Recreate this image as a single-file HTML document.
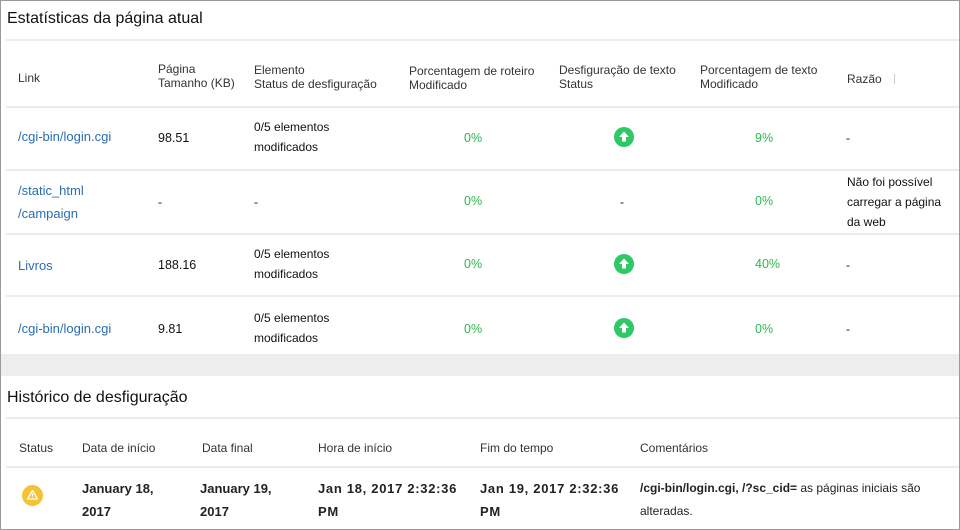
<!DOCTYPE html>
<html><head><meta charset="utf-8"><style>
body{margin:0;width:960px;height:530px;overflow:hidden;background:#fff;font-family:"Liberation Sans",sans-serif;color:#111;}
.frame{position:absolute;left:0;top:0;width:958px;height:528px;border:1px solid #9a9a9a;}
.t{position:absolute;white-space:nowrap;font-size:12px;line-height:20px;}
.h{color:#333;font-size:12px;line-height:14px;}
.l{color:#2a6db5;font-size:13px;}
.g{color:#2db84d;font-size:12.5px;}
.line{position:absolute;left:6px;right:1px;height:2px;background:#ececec;}
.title{position:absolute;font-size:16px;color:#111;}
.up{position:absolute;width:20px;height:20px;border-radius:50%;background:#2ec866;}
.up svg{position:absolute;left:0;top:0}
.d{font-weight:bold;color:#222;font-size:13px;line-height:23px;}
</style></head><body>
<div class="frame"></div>
<div class="title" style="left:7px;top:10px">Estatísticas da página atual</div>
<div class="line" style="top:39px"></div>
<div class="t h" style="left:18px;top:71px">Link</div>
<div class="t h" style="left:158px;top:62px">Página<br>Tamanho (KB)</div>
<div class="t h" style="left:254px;top:63px">Elemento<br>Status de desfiguração</div>
<div class="t h" style="left:409px;top:64px">Porcentagem de roteiro<br>Modificado</div>
<div class="t h" style="left:559px;top:63px">Desfiguração de texto<br>Status</div>
<div class="t h" style="left:700px;top:63px">Porcentagem de texto<br>Modificado</div>
<div class="t h" style="left:847px;top:72px">Razão</div>
<div style="position:absolute;left:894px;top:74px;width:1px;height:10px;background:#ccc"></div>
<div class="line" style="top:106px"></div>

<div class="t l" style="left:18px;top:127px">/cgi-bin/login.cgi</div>
<div class="t" style="left:158px;top:128px;font-size:12.5px">98.51</div>
<div class="t" style="left:254px;top:117px">0/5 elementos<br>modificados</div>
<div class="t g" style="left:464px;top:128px">0%</div>
<div class="up" style="left:614px;top:127px"><svg width="20" height="20"><path d="M10 4.5L15 10H12V14.5H8V10H5Z" fill="#fff"/></svg></div>
<div class="t g" style="left:755px;top:128px">9%</div>
<div class="t" style="left:846px;top:128px">-</div>
<div class="line" style="top:169px"></div>

<div class="t l" style="left:18px;top:179px;line-height:23px">/static_html<br>/campaign</div>
<div class="t" style="left:158px;top:192px">-</div>
<div class="t" style="left:254px;top:192px">-</div>
<div class="t g" style="left:464px;top:191px">0%</div>
<div class="t" style="left:620px;top:192px">-</div>
<div class="t g" style="left:755px;top:191px">0%</div>
<div class="t" style="left:847px;top:172px">Não foi possível<br>carregar a página<br>da web</div>
<div class="line" style="top:233px"></div>

<div class="t l" style="left:18px;top:256px">Livros</div>
<div class="t" style="left:158px;top:255px;font-size:12.5px">188.16</div>
<div class="t" style="left:254px;top:244px">0/5 elementos<br>modificados</div>
<div class="t g" style="left:464px;top:254px">0%</div>
<div class="up" style="left:614px;top:254px"><svg width="20" height="20"><path d="M10 4.5L15 10H12V14.5H8V10H5Z" fill="#fff"/></svg></div>
<div class="t g" style="left:755px;top:254px">40%</div>
<div class="t" style="left:846px;top:255px">-</div>
<div class="line" style="top:295px"></div>

<div class="t l" style="left:18px;top:319px">/cgi-bin/login.cgi</div>
<div class="t" style="left:158px;top:319px;font-size:12.5px">9.81</div>
<div class="t" style="left:254px;top:308px">0/5 elementos<br>modificados</div>
<div class="t g" style="left:464px;top:319px">0%</div>
<div class="up" style="left:614px;top:318px"><svg width="20" height="20"><path d="M10 4.5L15 10H12V14.5H8V10H5Z" fill="#fff"/></svg></div>
<div class="t g" style="left:755px;top:319px">0%</div>
<div class="t" style="left:846px;top:319px">-</div>

<div style="position:absolute;left:1px;right:1px;top:354px;height:22px;background:#ededee"></div>

<div class="title" style="left:7px;top:389px">Histórico de desfiguração</div>
<div class="line" style="top:417px"></div>
<div class="t h" style="left:19px;top:441px">Status</div>
<div class="t h" style="left:82px;top:441px">Data de início</div>
<div class="t h" style="left:202px;top:441px">Data final</div>
<div class="t h" style="left:318px;top:441px">Hora de início</div>
<div class="t h" style="left:480px;top:441px">Fim do tempo</div>
<div class="t h" style="left:640px;top:441px">Comentários</div>
<div class="line" style="top:466px"></div>
<div style="position:absolute;left:22px;top:485px;width:21px;height:21px;border-radius:50%;background:#f5c233"><svg width="21" height="21"><path d="M10.5 5.5L15.5 14H5.5Z" fill="none" stroke="#fff" stroke-width="1.3" stroke-linejoin="round"/><path d="M10.5 8.5V11.5M10.5 12.5V13" stroke="#fff" stroke-width="1.2"/></svg></div>
<div class="t d" style="left:82px;top:477px">January 18,<br>2017</div>
<div class="t d" style="left:200px;top:477px">January 19,<br>2017</div>
<div class="t d" style="left:318px;top:477px;letter-spacing:0.7px">Jan 18, 2017 2:32:36<br>PM</div>
<div class="t d" style="left:480px;top:477px;letter-spacing:0.7px">Jan 19, 2017 2:32:36<br>PM</div>
<div class="t" style="left:640px;top:477px;line-height:23px;color:#222"><b>/cgi-bin/login.cgi, /?sc_cid=</b><span> as páginas iniciais são</span><br><span>alteradas.</span></div>
</body></html>
